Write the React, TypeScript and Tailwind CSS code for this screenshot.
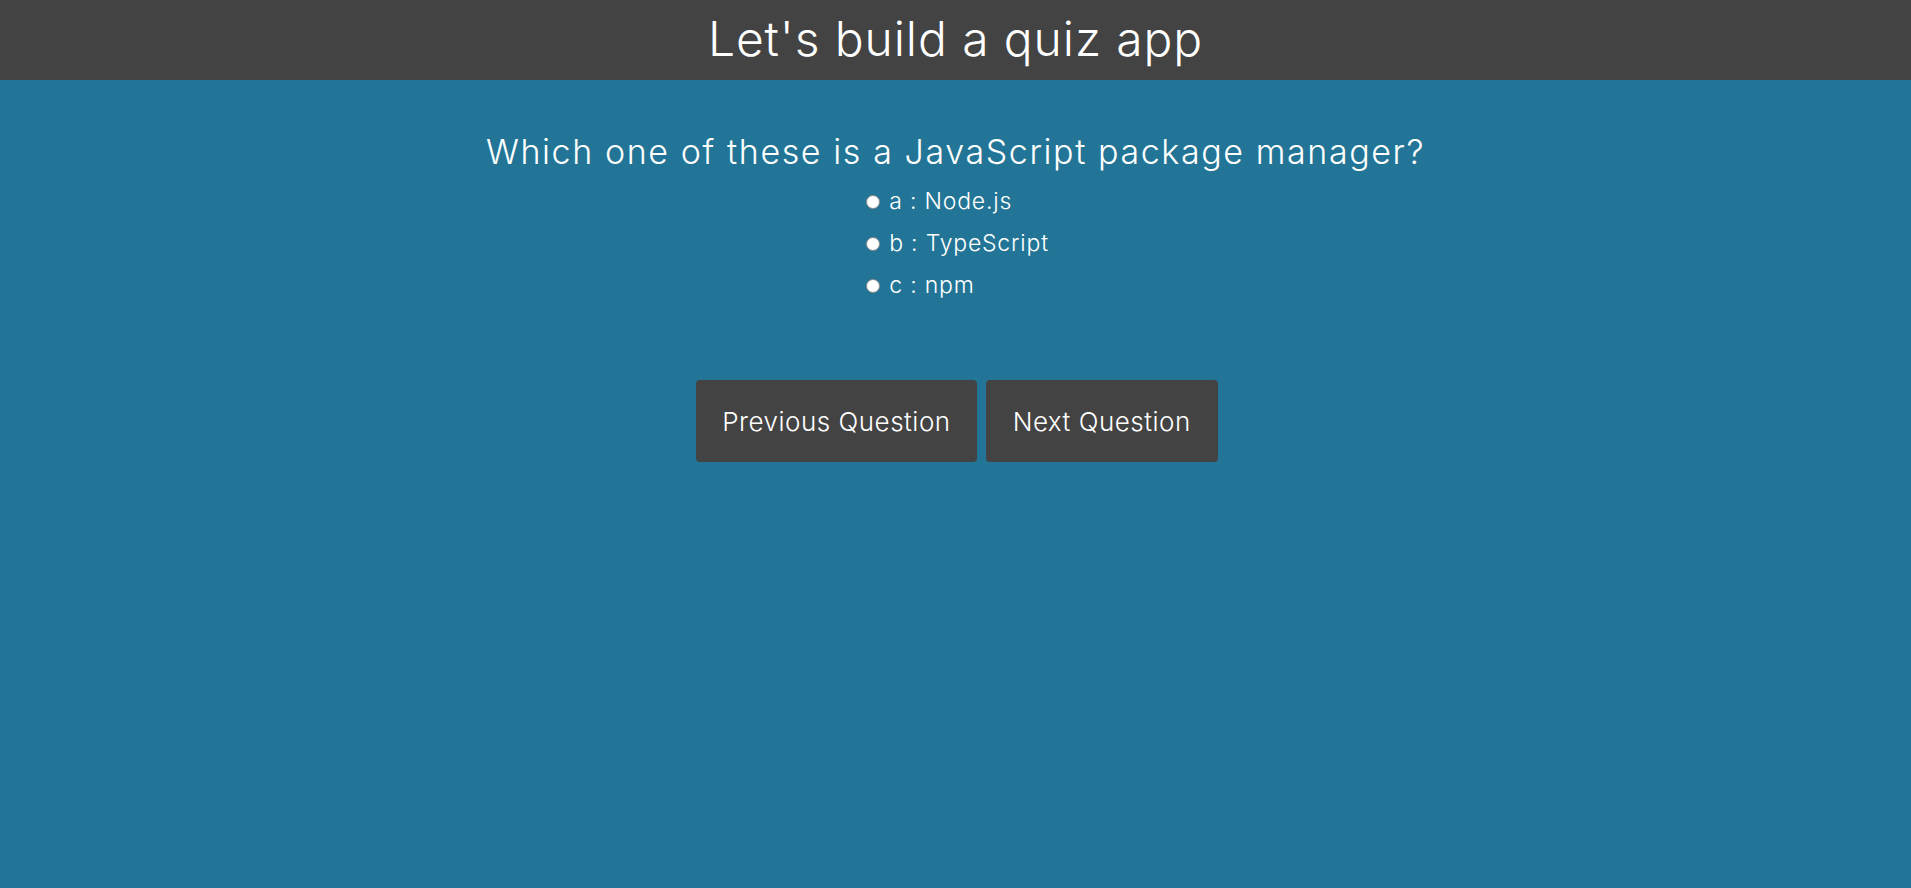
import { useState } from "react";

const question = {
  text: "Which one of these is a JavaScript package manager?",
  answers: [
    { key: "a", label: "Node.js" },
    { key: "b", label: "TypeScript" },
    { key: "c", label: "npm" },
  ],
};

export default function App() {
  const [picked, setPicked] = useState<string | null>(null);

  return (
    <div className="min-h-[888px] bg-[#227596] text-white font-['Inter','Liberation_Sans',sans-serif] font-light">
      <header className="h-[80px] bg-[#434343] flex items-center justify-center">
        <h1 className="text-[48px] leading-none pb-[2px] tracking-[0.9px]">Let's build a quiz app</h1>
      </header>

      <main className="pt-[52px] flex flex-col items-center">
        <h2 className="text-[34px] leading-[40px] tracking-[1.6px]">{question.text}</h2>

        <div className="mt-[8px] flex flex-col items-start pl-[4px]">
          {question.answers.map((a) => (
            <label key={a.key} className="h-[42px] flex items-center text-[23px] leading-[42px] tracking-[0.8px] cursor-pointer">
              <input
                type="radio"
                name="answer"
                checked={picked === a.key}
                onChange={() => setPicked(a.key)}
                className="appearance-none w-[14px] h-[14px] mr-[9px] mt-[2px] rounded-full bg-white border border-[#8a8a8a] checked:border-[4px] checked:border-[#0075ff]"
              />
              {a.key} : {a.label}
            </label>
          ))}
        </div>

        <div className="mt-[74px] flex gap-[9px] pl-[3px]">
          <button className="h-[82px] px-[26px] rounded-[4px] bg-[#434343] text-[26px] tracking-[0.5px]">
            Previous Question
          </button>
          <button className="h-[82px] px-[27px] rounded-[4px] bg-[#434343] text-[26px] tracking-[0.5px]">
            Next Question
          </button>
        </div>
      </main>
    </div>
  );
}
